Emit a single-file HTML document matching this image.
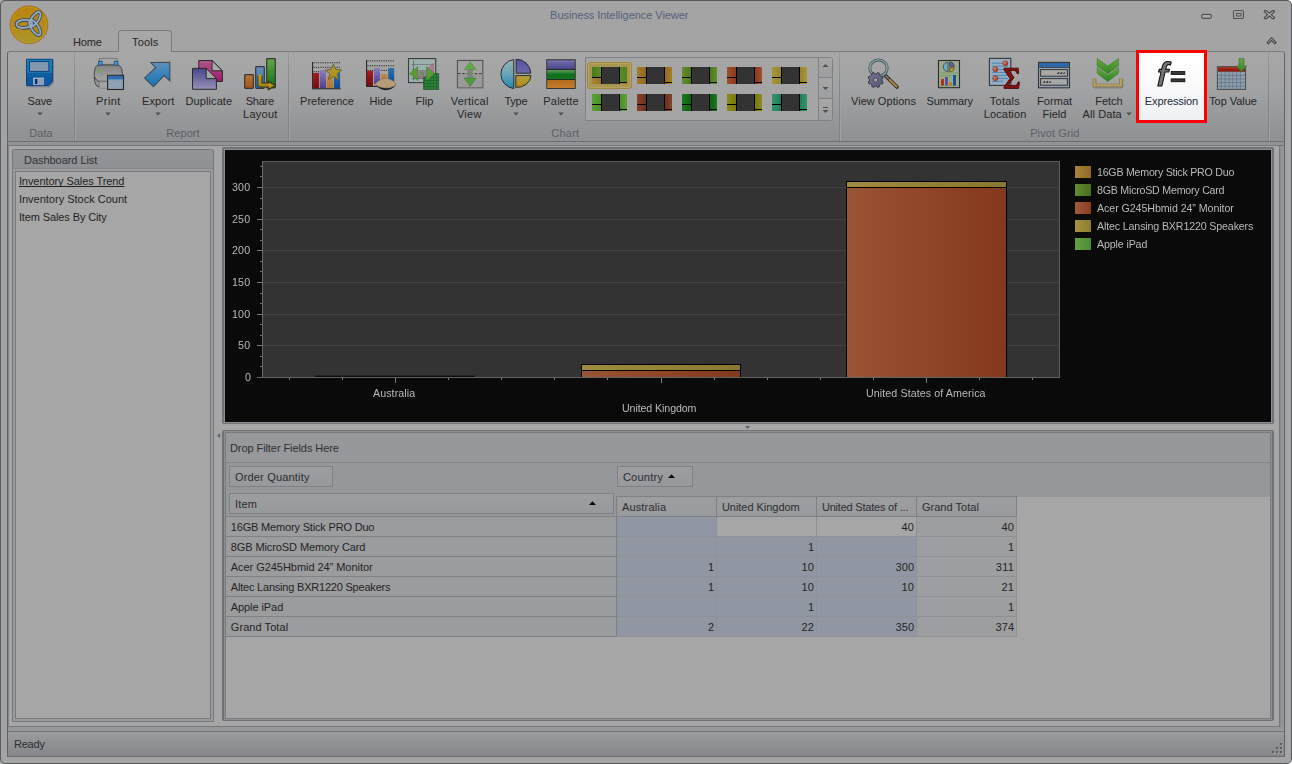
<!DOCTYPE html>
<html>
<head>
<meta charset="utf-8">
<title>Business Intelligence Viewer</title>
<style>
*{box-sizing:border-box;margin:0;padding:0}
html,body{width:1292px;height:764px;overflow:hidden;background:linear-gradient(90deg,#ababab 0,#ababab 50%,#fff 50%)}
body{font-family:"Liberation Sans",sans-serif;font-size:11px;color:#262626;position:relative}
.abs{position:absolute}
#win{position:absolute;left:0;top:0;width:1292px;height:764px;background:#a4a4a4;border-radius:5px;border:1px solid #575a5e}
.t{position:absolute;white-space:nowrap;line-height:13px;font-size:11px}
#ribbon{position:absolute;left:7px;top:51px;width:1278px;height:91px;border:1px solid #5f6266;border-top-color:#777a7e;border-bottom-color:#6c6f73;border-radius:3px 3px 0 0;background:linear-gradient(#a7a7a7 0,#a2a3a4 40%,#97989a 75%,#8e9093 100%)}
.gsep{position:absolute;top:52px;width:1px;height:89px;background:linear-gradient(rgba(125,128,132,.35),#82858a 45%,#7f8286)}
.gsep:after{content:"";position:absolute;left:1px;top:0;width:1px;height:100%;background:linear-gradient(rgba(170,171,173,.1),#a2a3a5)}
.gcap{color:#5b6068}
.lbl{color:#262626}
#tab{position:absolute;left:118px;top:30px;width:54px;height:22px;border:1px solid #777a7e;border-bottom:none;border-radius:4px 4px 0 0;background:#a7a7a7}
.dd{position:absolute;width:7px;height:4px;background:#4a4d51;clip-path:polygon(0.8px 0.4px,6.2px 0.4px,3.5px 3.4px)}
.gi{position:absolute;width:35px;height:17px;background:#000}
.gi:before{content:"";position:absolute;left:10px;top:0;width:17px;height:17px;background:#333}
.gi i{position:absolute;display:block}
.li{color:#1f1f1f}
.ct{color:#b9b9b9;will-change:transform}
.pv{color:#242424}
</style>
</head>
<body>
<div id="win"></div>
<div class="t" style="left:550.12px;top:9px;letter-spacing:-0.055px;color:#54617c">Business Intelligence Viewer</div>
<div class="t" style="left:73.00px;top:36px;letter-spacing:-0.136px;">Home</div>
<div id="ribbon"></div><div id="tab"></div>
<div class="t" style="left:132.10px;top:36px;letter-spacing:0.143px;">Tools</div>
<div class="gsep" style="left:74px"></div>
<div class="gsep" style="left:288px"></div>
<div class="gsep" style="left:839px"></div>
<div class="gsep" style="left:1268px"></div>
<div class="t gcap" style="left:29.36px;top:127px;letter-spacing:0.013px;">Data</div>
<div class="t gcap" style="left:166.37px;top:127px;letter-spacing:0.045px;">Report</div>
<div class="t gcap" style="left:551.27px;top:127px;letter-spacing:0.239px;">Chart</div>
<div class="t gcap" style="left:1030.20px;top:127px;letter-spacing:0.100px;">Pivot Grid</div>
<div class="abs" style="left:1136px;top:50px;width:71px;height:73px;border:3px solid #fe0000;background:linear-gradient(#ffffff 0,#fcfcfd 35%,#eef0f2 100%)"></div>
<div class="t lbl" style="left:27.58px;top:95px;letter-spacing:-0.145px;">Save</div>
<div class="dd" style="left:36.5px;top:112px"></div>
<div class="t lbl" style="left:96.02px;top:95px;letter-spacing:0.435px;">Print</div>
<div class="dd" style="left:104.5px;top:112px"></div>
<div class="t lbl" style="left:142.01px;top:95px;letter-spacing:0.117px;">Export</div>
<div class="dd" style="left:154.5px;top:112px"></div>
<div class="t lbl" style="left:185.45px;top:95px;letter-spacing:0.105px;">Duplicate</div>
<div class="t lbl" style="left:245.64px;top:95px;letter-spacing:-0.212px;">Share</div>
<div class="t lbl" style="left:243.07px;top:108px;letter-spacing:0.245px;">Layout</div>
<div class="t lbl" style="left:300.10px;top:95px;">Preference</div>
<div class="t lbl" style="left:369.52px;top:95px;letter-spacing:0.044px;">Hide</div>
<div class="t lbl" style="left:415.40px;top:95px;letter-spacing:0.091px;">Flip</div>
<div class="t lbl" style="left:450.81px;top:95px;letter-spacing:0.215px;">Vertical</div>
<div class="t lbl" style="left:456.94px;top:108px;letter-spacing:0.286px;">View</div>
<div class="t lbl" style="left:504.47px;top:95px;letter-spacing:-0.265px;">Type</div>
<div class="dd" style="left:512.5px;top:112px"></div>
<div class="t lbl" style="left:543.34px;top:95px;letter-spacing:0.179px;">Palette</div>
<div class="dd" style="left:557.5px;top:112px"></div>
<div class="t lbl" style="left:850.97px;top:95px;letter-spacing:0.041px;">View Options</div>
<div class="t lbl" style="left:926.60px;top:95px;letter-spacing:-0.109px;">Summary</div>
<div class="t lbl" style="left:989.78px;top:95px;letter-spacing:0.258px;">Totals</div>
<div class="t lbl" style="left:983.68px;top:108px;letter-spacing:0.151px;">Location</div>
<div class="t lbl" style="left:1037.07px;top:95px;letter-spacing:0.043px;">Format</div>
<div class="t lbl" style="left:1042.60px;top:108px;letter-spacing:-0.009px;">Field</div>
<div class="t lbl" style="left:1095.27px;top:95px;letter-spacing:-0.063px;">Fetch</div>
<div class="t lbl" style="left:1082.60px;top:108px;letter-spacing:0.084px;">All Data</div>
<div class="dd" style="left:1125.5px;top:112px"></div>
<div class="t lbl" style="left:1144.79px;top:95px;letter-spacing:-0.112px;color:#232a3a">Expression</div>
<div class="t lbl" style="left:1209.17px;top:95px;letter-spacing:-0.057px;">Top Value</div>
<div class="abs" style="left:585px;top:57px;width:248px;height:64px;border:1px solid #7e8185;border-radius:0 3px 3px 0;background:#a5a5a5"></div>
<div class="abs" style="left:818px;top:58px;width:1px;height:62px;background:#7e8185"></div>
<div class="abs" style="left:819px;top:58px;width:13px;height:19px;background:linear-gradient(#a7a7a7,#9d9e9f)"></div>
<div class="abs" style="left:819px;top:78px;width:13px;height:20px;background:linear-gradient(#a7a7a7,#9d9e9f)"></div>
<div class="abs" style="left:819px;top:99px;width:13px;height:21px;background:linear-gradient(#a7a7a7,#9d9e9f)"></div>
<div class="abs" style="left:819px;top:77px;width:13px;height:1px;background:#7e8185"></div>
<div class="abs" style="left:819px;top:98px;width:13px;height:1px;background:#7e8185"></div>
<svg class="abs" style="left:819px;top:58px" width="13" height="62" viewBox="0 0 13 62">
 <path d="M3.5 9 L6.5 6 L9.5 9 Z" fill="#4d5054"/><path d="M3.5 29 L9.5 29 L6.5 32 Z" fill="#4d5054"/>
 <rect x="4" y="49" width="5" height="1" fill="#4d5054"/><path d="M3.5 52 L9.5 52 L6.5 55 Z" fill="#4d5054"/></svg>
<div class="abs" style="left:587px;top:62px;width:45px;height:27px;border:1px solid #a38540;border-radius:3px;background:#a89650;box-shadow:inset 0 0 0 1px #b3a45e"></div>
<div class="gi" style="left:592px;top:67px"><i style="left:0;top:0;width:9px;height:10px;background:linear-gradient(90deg,#4a7a18,#5a8a24)"></i><i style="left:0;top:11px;width:9px;height:6px;background:linear-gradient(90deg,#a88434,#9a7424)"></i><i style="left:28px;top:0;width:7px;height:15px;background:linear-gradient(90deg,#5a8a24,#547f22)"></i><i style="left:28px;top:16px;width:7px;height:1px;background:linear-gradient(90deg,#a88434,#9a7424)"></i></div>
<div class="gi" style="left:637px;top:67px"><i style="left:0;top:0;width:9px;height:10px;background:linear-gradient(90deg,#a47c2c,#946a18)"></i><i style="left:0;top:11px;width:9px;height:6px;background:linear-gradient(90deg,#a47c2c,#946a18)"></i><i style="left:28px;top:0;width:7px;height:15px;background:linear-gradient(90deg,#946a18,#a47c2c)"></i><i style="left:28px;top:16px;width:7px;height:1px;background:linear-gradient(90deg,#946a18,#a47c2c)"></i></div>
<div class="gi" style="left:682px;top:67px"><i style="left:0;top:0;width:9px;height:10px;background:linear-gradient(90deg,#62902e,#4a7818)"></i><i style="left:0;top:11px;width:9px;height:6px;background:linear-gradient(90deg,#62902e,#4a7818)"></i><i style="left:28px;top:0;width:7px;height:15px;background:linear-gradient(90deg,#4a7818,#62902e)"></i><i style="left:28px;top:16px;width:7px;height:1px;background:linear-gradient(90deg,#4a7818,#62902e)"></i></div>
<div class="gi" style="left:727px;top:67px"><i style="left:0;top:0;width:9px;height:10px;background:linear-gradient(90deg,#a0502e,#8c3a1a)"></i><i style="left:0;top:11px;width:9px;height:6px;background:linear-gradient(90deg,#a0502e,#8c3a1a)"></i><i style="left:28px;top:0;width:7px;height:15px;background:linear-gradient(90deg,#8c3a1a,#a0502e)"></i><i style="left:28px;top:16px;width:7px;height:1px;background:linear-gradient(90deg,#8c3a1a,#a0502e)"></i></div>
<div class="gi" style="left:772px;top:67px"><i style="left:0;top:0;width:9px;height:10px;background:linear-gradient(90deg,#a8963c,#98842a)"></i><i style="left:0;top:11px;width:9px;height:6px;background:linear-gradient(90deg,#a8963c,#98842a)"></i><i style="left:28px;top:0;width:7px;height:15px;background:linear-gradient(90deg,#98842a,#a8963c)"></i><i style="left:28px;top:16px;width:7px;height:1px;background:linear-gradient(90deg,#98842a,#a8963c)"></i></div>
<div class="gi" style="left:592px;top:94px"><i style="left:0;top:0;width:9px;height:10px;background:linear-gradient(90deg,#5ea038,#4a9024)"></i><i style="left:0;top:11px;width:9px;height:6px;background:linear-gradient(90deg,#5ea038,#4a9024)"></i><i style="left:28px;top:0;width:7px;height:15px;background:linear-gradient(90deg,#4a9024,#5ea038)"></i><i style="left:28px;top:16px;width:7px;height:1px;background:linear-gradient(90deg,#4a9024,#5ea038)"></i></div>
<div class="gi" style="left:637px;top:94px"><i style="left:0;top:0;width:9px;height:10px;background:linear-gradient(90deg,#80422a,#6e3018)"></i><i style="left:0;top:11px;width:9px;height:6px;background:linear-gradient(90deg,#80422a,#6e3018)"></i><i style="left:28px;top:0;width:7px;height:15px;background:linear-gradient(90deg,#6e3018,#80422a)"></i><i style="left:28px;top:16px;width:7px;height:1px;background:linear-gradient(90deg,#6e3018,#80422a)"></i></div>
<div class="gi" style="left:682px;top:94px"><i style="left:0;top:0;width:9px;height:10px;background:linear-gradient(90deg,#1c7a22,#0c6010)"></i><i style="left:0;top:11px;width:9px;height:6px;background:linear-gradient(90deg,#1c7a22,#0c6010)"></i><i style="left:28px;top:0;width:7px;height:15px;background:linear-gradient(90deg,#0c6010,#1c7a22)"></i><i style="left:28px;top:16px;width:7px;height:1px;background:linear-gradient(90deg,#0c6010,#1c7a22)"></i></div>
<div class="gi" style="left:727px;top:94px"><i style="left:0;top:0;width:9px;height:10px;background:linear-gradient(90deg,#8c8c1e,#7a7a0a)"></i><i style="left:0;top:11px;width:9px;height:6px;background:linear-gradient(90deg,#8c8c1e,#7a7a0a)"></i><i style="left:28px;top:0;width:7px;height:15px;background:linear-gradient(90deg,#7a7a0a,#8c8c1e)"></i><i style="left:28px;top:16px;width:7px;height:1px;background:linear-gradient(90deg,#7a7a0a,#8c8c1e)"></i></div>
<div class="gi" style="left:772px;top:94px"><i style="left:0;top:0;width:9px;height:10px;background:linear-gradient(90deg,#35946e,#1f7c58)"></i><i style="left:0;top:11px;width:9px;height:6px;background:linear-gradient(90deg,#35946e,#1f7c58)"></i><i style="left:28px;top:0;width:7px;height:15px;background:linear-gradient(90deg,#1f7c58,#35946e)"></i><i style="left:28px;top:16px;width:7px;height:1px;background:linear-gradient(90deg,#1f7c58,#35946e)"></i></div>
<svg class="abs" style="left:0;top:0" width="1292" height="150" viewBox="0 0 1292 150">
<defs>
 <radialGradient id="gLogo" cx="50%" cy="35%" r="70%"><stop offset="0" stop-color="#c08a10"/><stop offset=".55" stop-color="#b98a14"/><stop offset="1" stop-color="#a8902a"/></radialGradient>
 <linearGradient id="gLogo2" x1="0" y1="0" x2="0" y2="1"><stop offset="0" stop-color="#bb8410"/><stop offset=".6" stop-color="#b48c18"/><stop offset="1" stop-color="#a8982e"/></linearGradient>
 <linearGradient id="gSave" x1="0" y1="0" x2="0" y2="1"><stop offset="0" stop-color="#1b86b6"/><stop offset=".5" stop-color="#177ab0"/><stop offset=".52" stop-color="#0f5fa4"/><stop offset="1" stop-color="#0c55a0"/></linearGradient>
 <linearGradient id="gPrn" x1="0" y1="0" x2="0" y2="1"><stop offset="0" stop-color="#828282"/><stop offset=".6" stop-color="#a0a0a0"/><stop offset="1" stop-color="#8c8c8c"/></linearGradient>
 <linearGradient id="gExp" x1="0" y1="0" x2="0" y2="1"><stop offset="0" stop-color="#5f90c0"/><stop offset="1" stop-color="#1274b4"/></linearGradient>
 <linearGradient id="gDupA" x1="0" y1="0" x2="0" y2="1"><stop offset="0" stop-color="#b0588a"/><stop offset="1" stop-color="#a0186a"/></linearGradient>
 <linearGradient id="gDupB" x1="0" y1="0" x2="0" y2="1"><stop offset="0" stop-color="#46468c"/><stop offset="1" stop-color="#9690b6"/></linearGradient>
 <linearGradient id="gOr" x1="0" y1="0" x2="0" y2="1"><stop offset="0" stop-color="#b87830"/><stop offset="1" stop-color="#a8501c"/></linearGradient>
 <linearGradient id="gBl" x1="0" y1="0" x2="0" y2="1"><stop offset="0" stop-color="#6a8eb8"/><stop offset="1" stop-color="#1878b8"/></linearGradient>
 <linearGradient id="gGr" x1="0" y1="0" x2="0" y2="1"><stop offset="0" stop-color="#62a848"/><stop offset="1" stop-color="#0e7016"/></linearGradient>
 <linearGradient id="gYe" x1="0" y1="0" x2="0" y2="1"><stop offset="0" stop-color="#c0a020"/><stop offset="1" stop-color="#a88414"/></linearGradient>
 <linearGradient id="gRed" x1="0" y1="0" x2="0" y2="1"><stop offset="0" stop-color="#a81a20"/><stop offset="1" stop-color="#780c0c"/></linearGradient>
 <linearGradient id="gPur" x1="0" y1="0" x2="0" y2="1"><stop offset="0" stop-color="#8a80b8"/><stop offset="1" stop-color="#4a3e94"/></linearGradient>
 <linearGradient id="gOr2" x1="0" y1="0" x2="0" y2="1"><stop offset="0" stop-color="#c08c4c"/><stop offset="1" stop-color="#b87424"/></linearGradient>
 <linearGradient id="gBl2" x1="0" y1="0" x2="0" y2="1"><stop offset="0" stop-color="#2a74b0"/><stop offset="1" stop-color="#0e4c90"/></linearGradient>
 <linearGradient id="gStar" x1="0" y1="0" x2="0" y2="1"><stop offset="0" stop-color="#b8a030"/><stop offset="1" stop-color="#a88c14"/></linearGradient>

 <linearGradient id="gPieL" x1="0" y1="0" x2="0" y2="1"><stop offset="0" stop-color="#98b4b8"/><stop offset=".5" stop-color="#6aa4b8"/><stop offset="1" stop-color="#1c88b4"/></linearGradient>
 <linearGradient id="gPur2" x1="0" y1="0" x2="0" y2="1"><stop offset="0" stop-color="#5450a0"/><stop offset="1" stop-color="#6c68ac"/></linearGradient>
 <linearGradient id="gGold" x1="0" y1="0" x2="0" y2="1"><stop offset="0" stop-color="#b8a03c"/><stop offset="1" stop-color="#b08a10"/></linearGradient>
 <linearGradient id="gPalP" x1="0" y1="0" x2="0" y2="1"><stop offset="0" stop-color="#7672ac"/><stop offset="1" stop-color="#48448c"/></linearGradient>
 <linearGradient id="gPalG" x1="0" y1="0" x2="0" y2="1"><stop offset="0" stop-color="#5aa05a"/><stop offset=".55" stop-color="#0c6c1a"/><stop offset="1" stop-color="#14781e"/></linearGradient>
 <linearGradient id="gPalO" x1="0" y1="0" x2="0" y2="1"><stop offset="0" stop-color="#b06c1c"/><stop offset="1" stop-color="#c47c2c"/></linearGradient>

 <linearGradient id="gGear" x1="0" y1="0" x2="1" y2="1"><stop offset="0" stop-color="#74768f"/><stop offset="1" stop-color="#56587c"/></linearGradient>
 <radialGradient id="gBall" cx="35%" cy="35%" r="70%"><stop offset="0" stop-color="#d08a78"/><stop offset="1" stop-color="#a82c14"/></radialGradient>
 <linearGradient id="gChev" x1="0" y1="0" x2="0" y2="1"><stop offset="0" stop-color="#6aa83c"/><stop offset="1" stop-color="#2c8424"/></linearGradient>
 <linearGradient id="gTVred" x1="0" y1="0" x2="0" y2="1"><stop offset="0" stop-color="#b0301c"/><stop offset="1" stop-color="#801408"/></linearGradient>
</defs>

<!-- app logo -->
<circle cx="29" cy="24.8" r="18.9" fill="url(#gLogo2)" stroke="#ae6c14" stroke-width="0.9"/>
<circle cx="29" cy="24.8" r="17.6" fill="none" stroke="#c0a030" stroke-width="0.8" opacity=".55"/>
<g fill="none" stroke="#34445c" stroke-width="3.5">
 <ellipse cx="24.3" cy="23.9" rx="7.9" ry="4" transform="rotate(-3 24.3 23.9)"/>
 <ellipse cx="35" cy="19.3" rx="8.4" ry="3.5" transform="rotate(-56 35 19.3)"/>
 <ellipse cx="34.9" cy="27.5" rx="8.8" ry="3.5" transform="rotate(57 34.9 27.5)"/>
</g>
<g fill="none" stroke="#94acc0" stroke-width="1.9">
 <ellipse cx="24.3" cy="23.9" rx="7.9" ry="4" transform="rotate(-3 24.3 23.9)"/>
 <ellipse cx="35" cy="19.3" rx="8.4" ry="3.5" transform="rotate(-56 35 19.3)"/>
 <ellipse cx="34.9" cy="27.5" rx="8.8" ry="3.5" transform="rotate(57 34.9 27.5)"/>
</g>

<!-- Save -->
<path d="M27 87.6 L50 87.6 L54 83 L54 60 L27 60 Z" fill="#6e7074" opacity=".5"/>
<path d="M26.5 59.3 L52.6 59.3 L52.6 81.4 L48.8 85.6 L26.5 85.6 Z" fill="url(#gSave)" stroke="#0b3f88" stroke-width="1"/>
<rect x="29.5" y="61.6" width="19.4" height="9.8" fill="#8398ac" stroke="#0b3f88" stroke-width="1"/>
<rect x="33" y="77.8" width="11" height="7.3" fill="#8ea1b4"/>
<rect x="33" y="77.8" width="11" height="1" fill="#a8b8c6"/>
<rect x="35" y="79" width="2.3" height="5" fill="#0a2f7a"/>

<!-- Print -->
<rect x="99.3" y="58.3" width="17.6" height="6" fill="#a6a6a6" stroke="#707070" stroke-width=".8"/>
<path d="M98 65 C95 66,94.3 70,94.3 75.5 C94.3 82,95.5 86.5,99 86.8 L118 86.8 C121.5 86,122.3 81,122.3 75.5 C122.3 70,121.6 66,118 65 Z" fill="url(#gPrn)" stroke="#454545" stroke-width="1"/>
<path d="M94.6 77 C96 80.5,98 81.4,100 81.4 L108 81.4" fill="none" stroke="#3a3a3a" stroke-width="1"/>
<rect x="98.6" y="61.3" width="3.4" height="3.8" fill="#5a96cc" stroke="#1d5a98" stroke-width="1"/>
<rect x="114.4" y="61.3" width="3.4" height="3.8" fill="#5a96cc" stroke="#1d5a98" stroke-width="1"/>
<circle cx="99.1" cy="70.9" r="1.6" fill="#6cb04a" stroke="#8a8a8a" stroke-width=".5"/>
<rect x="99.4" y="81.6" width="9" height="6.6" fill="#a4a4a4" stroke="#7a7a7a" stroke-width=".6"/>
<rect x="107.6" y="75.3" width="15.9" height="14.2" fill="#8ea2b4" stroke="#262626" stroke-width="1.1"/>
<rect x="108.2" y="75.9" width="14.7" height="3.6" fill="#2c6eb0"/>
<rect x="108.2" y="79.5" width="14.7" height=".8" fill="#6a9ac8"/>

<!-- Export -->
<path d="M150.9 62.5 L169.8 62.3 L169.8 80.8 L164 75.6 L153.4 86.8 L144.6 77.9 L155.6 67.6 Z" fill="url(#gExp)" stroke="#424a54" stroke-width="1.1" stroke-linejoin="miter"/>

<!-- Duplicate -->
<path d="M198.8 60.5 L212 60.5 L222.4 70.8 L222.4 81.5 L198.8 81.5 Z" fill="url(#gDupA)" stroke="#2a2a2a" stroke-width="1"/>
<path d="M212 60.5 L212 70.8 L222.4 70.8 Z" fill="#a8a8a8" stroke="#2a2a2a" stroke-width="1" stroke-linejoin="round"/>
<path d="M192.5 68.4 L206.2 68.4 L216.4 78.6 L216.4 89.3 L192.5 89.3 Z" fill="url(#gDupB)" stroke="#2a2a2a" stroke-width="1"/>
<path d="M206.2 68.4 L206.2 78.6 L216.4 78.6 Z" fill="#a6a6a6" stroke="#2a2a2a" stroke-width="1" stroke-linejoin="round"/>

<!-- Share Layout -->
<rect x="244.7" y="74.7" width="8.6" height="13.6" rx=".7" fill="url(#gOr)" stroke="#363636" stroke-width="1.2"/>
<rect x="255.7" y="66.6" width="8.6" height="21.7" rx=".7" fill="url(#gBl)" stroke="#363636" stroke-width="1.2"/>
<rect x="266.7" y="58.6" width="8.6" height="29.4" rx=".7" fill="url(#gGr)" stroke="#363636" stroke-width="1.2"/>
<path d="M259.9 75.4 L259.9 85 L269.5 85" fill="none" stroke="#3c3420" stroke-width="5" stroke-linejoin="round"/>
<path d="M268.2 80.8 L275.8 85.5 L268.2 90.2 Z" fill="#3c3420" stroke="#3c3420" stroke-width=".8" stroke-linejoin="round"/>
<path d="M259.9 75.4 L259.9 85 L269.5 85" fill="none" stroke="url(#gYe)" stroke-width="3" stroke-linejoin="round"/>
<rect x="258.4" y="74.4" width="3" height="2" fill="#b89c24"/>
<path d="M268.8 82.4 L274.2 85.5 L268.8 88.6 Z" fill="#b8981c"/>

<!-- Preference -->
<rect x="313.5" y="62.2" width="1.1" height="1.1" fill="#2a2a2a"/><rect x="315.8" y="62.2" width="1.1" height="1.1" fill="#2a2a2a"/><rect x="318.1" y="62.2" width="1.1" height="1.1" fill="#2a2a2a"/><rect x="320.4" y="62.2" width="1.1" height="1.1" fill="#2a2a2a"/><rect x="322.7" y="62.2" width="1.1" height="1.1" fill="#2a2a2a"/><rect x="325.0" y="62.2" width="1.1" height="1.1" fill="#2a2a2a"/><rect x="327.3" y="62.2" width="1.1" height="1.1" fill="#2a2a2a"/><rect x="329.6" y="62.2" width="1.1" height="1.1" fill="#2a2a2a"/><rect x="331.9" y="62.2" width="1.1" height="1.1" fill="#2a2a2a"/><rect x="334.2" y="62.2" width="1.1" height="1.1" fill="#2a2a2a"/><rect x="336.5" y="62.2" width="1.1" height="1.1" fill="#2a2a2a"/><rect x="338.8" y="62.2" width="1.1" height="1.1" fill="#2a2a2a"/><rect x="313.5" y="66.8" width="1.1" height="1.1" fill="#2a2a2a"/><rect x="315.8" y="66.8" width="1.1" height="1.1" fill="#2a2a2a"/><rect x="318.1" y="66.8" width="1.1" height="1.1" fill="#2a2a2a"/><rect x="320.4" y="66.8" width="1.1" height="1.1" fill="#2a2a2a"/><rect x="322.7" y="66.8" width="1.1" height="1.1" fill="#2a2a2a"/><rect x="325.0" y="66.8" width="1.1" height="1.1" fill="#2a2a2a"/><rect x="327.3" y="66.8" width="1.1" height="1.1" fill="#2a2a2a"/><rect x="329.6" y="66.8" width="1.1" height="1.1" fill="#2a2a2a"/><rect x="331.9" y="66.8" width="1.1" height="1.1" fill="#2a2a2a"/><rect x="334.2" y="66.8" width="1.1" height="1.1" fill="#2a2a2a"/><rect x="336.5" y="66.8" width="1.1" height="1.1" fill="#2a2a2a"/><rect x="338.8" y="66.8" width="1.1" height="1.1" fill="#2a2a2a"/><rect x="313.5" y="71.2" width="1.1" height="1.1" fill="#2a2a2a"/><rect x="315.8" y="71.2" width="1.1" height="1.1" fill="#2a2a2a"/><rect x="318.1" y="71.2" width="1.1" height="1.1" fill="#2a2a2a"/><rect x="320.4" y="71.2" width="1.1" height="1.1" fill="#2a2a2a"/><rect x="322.7" y="71.2" width="1.1" height="1.1" fill="#2a2a2a"/><rect x="325.0" y="71.2" width="1.1" height="1.1" fill="#2a2a2a"/><rect x="327.3" y="71.2" width="1.1" height="1.1" fill="#2a2a2a"/><rect x="329.6" y="71.2" width="1.1" height="1.1" fill="#2a2a2a"/><rect x="331.9" y="71.2" width="1.1" height="1.1" fill="#2a2a2a"/><rect x="334.2" y="71.2" width="1.1" height="1.1" fill="#2a2a2a"/><rect x="336.5" y="71.2" width="1.1" height="1.1" fill="#2a2a2a"/><rect x="338.8" y="71.2" width="1.1" height="1.1" fill="#2a2a2a"/>
<rect x="312" y="62" width="1.1" height="26.8" fill="#2a2a2a"/>
<rect x="313.1" y="73" width="6" height="15.3" fill="url(#gRed)"/>
<rect x="319.9" y="70" width="6.2" height="18.3" fill="url(#gPur)"/>
<rect x="326.9" y="75.8" width="6.2" height="12.5" fill="url(#gOr2)"/>
<rect x="333.9" y="71" width="6.2" height="17.3" fill="url(#gBl2)"/>
<rect x="312" y="88.2" width="28.6" height="1.1" fill="#2a2a2a"/>
<polygon points="333.50,64.10 335.79,69.44 341.58,69.97 337.21,73.81 338.50,79.48 333.50,76.50 328.50,79.48 329.79,73.81 325.42,69.97 331.21,69.44" fill="url(#gStar)" stroke="#6e6034" stroke-width="1" stroke-linejoin="round"/>

<!-- Hide -->
<rect x="367.5" y="60.3" width="1.1" height="1.1" fill="#2a2a2a"/><rect x="369.8" y="60.3" width="1.1" height="1.1" fill="#2a2a2a"/><rect x="372.1" y="60.3" width="1.1" height="1.1" fill="#2a2a2a"/><rect x="374.4" y="60.3" width="1.1" height="1.1" fill="#2a2a2a"/><rect x="376.7" y="60.3" width="1.1" height="1.1" fill="#2a2a2a"/><rect x="379.0" y="60.3" width="1.1" height="1.1" fill="#2a2a2a"/><rect x="381.3" y="60.3" width="1.1" height="1.1" fill="#2a2a2a"/><rect x="383.6" y="60.3" width="1.1" height="1.1" fill="#2a2a2a"/><rect x="385.9" y="60.3" width="1.1" height="1.1" fill="#2a2a2a"/><rect x="388.2" y="60.3" width="1.1" height="1.1" fill="#2a2a2a"/><rect x="390.5" y="60.3" width="1.1" height="1.1" fill="#2a2a2a"/><rect x="392.8" y="60.3" width="1.1" height="1.1" fill="#2a2a2a"/><rect x="367.5" y="65.2" width="1.1" height="1.1" fill="#2a2a2a"/><rect x="369.8" y="65.2" width="1.1" height="1.1" fill="#2a2a2a"/><rect x="372.1" y="65.2" width="1.1" height="1.1" fill="#2a2a2a"/><rect x="374.4" y="65.2" width="1.1" height="1.1" fill="#2a2a2a"/><rect x="376.7" y="65.2" width="1.1" height="1.1" fill="#2a2a2a"/><rect x="379.0" y="65.2" width="1.1" height="1.1" fill="#2a2a2a"/><rect x="381.3" y="65.2" width="1.1" height="1.1" fill="#2a2a2a"/><rect x="383.6" y="65.2" width="1.1" height="1.1" fill="#2a2a2a"/><rect x="385.9" y="65.2" width="1.1" height="1.1" fill="#2a2a2a"/><rect x="388.2" y="65.2" width="1.1" height="1.1" fill="#2a2a2a"/><rect x="390.5" y="65.2" width="1.1" height="1.1" fill="#2a2a2a"/><rect x="392.8" y="65.2" width="1.1" height="1.1" fill="#2a2a2a"/><rect x="367.5" y="69.8" width="1.1" height="1.1" fill="#2a2a2a"/><rect x="369.8" y="69.8" width="1.1" height="1.1" fill="#2a2a2a"/><rect x="372.1" y="69.8" width="1.1" height="1.1" fill="#2a2a2a"/><rect x="374.4" y="69.8" width="1.1" height="1.1" fill="#2a2a2a"/><rect x="376.7" y="69.8" width="1.1" height="1.1" fill="#2a2a2a"/><rect x="379.0" y="69.8" width="1.1" height="1.1" fill="#2a2a2a"/><rect x="381.3" y="69.8" width="1.1" height="1.1" fill="#2a2a2a"/><rect x="383.6" y="69.8" width="1.1" height="1.1" fill="#2a2a2a"/><rect x="385.9" y="69.8" width="1.1" height="1.1" fill="#2a2a2a"/><rect x="388.2" y="69.8" width="1.1" height="1.1" fill="#2a2a2a"/><rect x="390.5" y="69.8" width="1.1" height="1.1" fill="#2a2a2a"/><rect x="392.8" y="69.8" width="1.1" height="1.1" fill="#2a2a2a"/>
<rect x="366" y="60" width="1.1" height="26.5" fill="#2a2a2a"/>
<rect x="367" y="70.8" width="6" height="15.4" fill="url(#gRed)"/>
<rect x="374" y="68" width="6" height="16" fill="url(#gPur)"/>
<rect x="381.2" y="74" width="6" height="6" fill="url(#gOr2)"/>
<rect x="388.2" y="68" width="6" height="15" fill="url(#gBl2)"/>
<rect x="366" y="85.9" width="12" height="1.1" fill="#2a2a2a"/>
<path d="M374.6 84.6 C380 88.2,390 90.6,396.6 84.6 C390 93,380 91,374.6 84.6 Z" fill="#1e1e1e"/>
<path d="M374.8 84.3 C379 79.5,383 78.4,386 78.4 C390 78.4,394 81,396.4 84.2 C390 89.6,380 88.6,374.8 84.3 Z" fill="#b89c78" stroke="#7a6a54" stroke-width=".5"/>

<!-- Flip -->
<rect x="408.5" y="58.6" width="27.2" height="24" fill="#9cb0ae" stroke="#3c3c3c" stroke-width="1.1"/>
<path d="M413.5 60.5 L413.5 80.5 M411.5 78.6 L433.5 78.6" stroke="#5a6a6a" stroke-width=".9" fill="none"/>
<path d="M414 64.5 L433 64.5 M411.5 69.5 L413 69.5 M411.5 64.5 L413 64.5 M411.5 74.5 L413 74.5" stroke="#6a7a7a" stroke-width=".8" fill="none"/>
<path d="M433.3 63.6 L433.3 78 L417.5 78 Z" fill="#b87e98" stroke="#a04a74" stroke-width=".6"/>
<rect x="423.6" y="73.6" width="15.1" height="16" fill="#1c6a2c" stroke="#2c5a34" stroke-width=".8"/>
<path d="M425 76 H438 M425 79 H438 M425 82 H438 M425 85 H438 M425 88 H438" stroke="#3c9a48" stroke-width="1" stroke-dasharray="2.2 .8" fill="none"/>
<path d="M409.6 73.6 L417.8 66.6 L417.8 80.6 Z" fill="#5a9c34" stroke="#3c7a24" stroke-width=".5"/>
<path d="M434.8 73.6 L426.6 66.6 L426.6 80.6 Z" fill="#5a9c34" stroke="#3c7a24" stroke-width=".5"/>
<rect x="417.6" y="70.6" width="9.2" height="6" fill="#8a8a8a" stroke="#6a6a6a" stroke-width=".5"/>
<circle cx="422.2" cy="73.6" r="1.6" fill="#6a9c5a" stroke="#5a5a5a" stroke-width=".4"/>

<!-- Vertical View -->
<rect x="457.4" y="60.4" width="25.4" height="27.4" fill="#a2a2a2" stroke="#4a4a4a" stroke-width="1"/>
<rect x="457.9" y="73.6" width="24.4" height="13.7" fill="#9a9a9a"/>
<path d="M458 73.6 H482.5" stroke="#3a3a3a" stroke-width="1" stroke-dasharray="2.6 1.6" fill="none"/>
<rect x="467.4" y="69" width="5.6" height="9.6" fill="#868686"/>
<path d="M470.2 61.6 L476.2 69.6 L464.2 69.6 Z" fill="#5fa848" stroke="#4a8a3a" stroke-width=".5"/>
<path d="M470.2 86.6 L476.2 78 L464.2 78 Z" fill="#4c9c38" stroke="#3a7a2a" stroke-width=".5"/>
<circle cx="470.2" cy="73.7" r="1.5" fill="#5fa848" stroke="#6a6a6a" stroke-width=".4"/>

<!-- Type (pie) -->
<path d="M513.8 59.6 A14.6 14.6 0 0 0 513.8 88.6 Z" fill="url(#gPieL)" stroke="#2c2c2c" stroke-width="1"/>
<path d="M516.2 59.2 A14.6 14.6 0 0 1 530.8 73.2 L516.2 73.2 Z" fill="url(#gPur2)" stroke="#2c2c2c" stroke-width="1"/>
<path d="M531 75.6 A14.4 12.4 0 0 1 515.8 87.4 L515.8 75.6 Z" fill="url(#gGold)" stroke="#2c2c2c" stroke-width="1"/>

<!-- Palette -->
<rect x="546.3" y="59.3" width="29.4" height="29.6" fill="#2a2a2a"/>
<rect x="547.2" y="60.2" width="27.6" height="8.8" fill="url(#gPalP)"/>
<rect x="547.2" y="70" width="27.6" height="9" fill="url(#gPalG)"/>
<rect x="547.2" y="80" width="27.6" height="8" fill="url(#gPalO)"/>

<!-- View Options -->
<path d="M885.4 75.6 L897 87" stroke="#2c2a26" stroke-width="3.6" stroke-linecap="round" fill="none"/>
<path d="M889.6 79.8 L896.6 86.6" stroke="#b08c3c" stroke-width="2" stroke-linecap="round" fill="none"/>
<path d="M885.6 75.8 L888.6 78.8" stroke="#8e8e8e" stroke-width="1.3" fill="none"/>
<ellipse cx="878.5" cy="68.1" rx="8.7" ry="8.2" fill="none" stroke="#44545a" stroke-width="3"/>
<ellipse cx="878.5" cy="68.1" rx="8.7" ry="8.2" fill="none" stroke="#8ea2a4" stroke-width="1.4"/>
<polygon points="883.19,81.80 882.27,84.02 880.85,83.62 879.32,85.15 879.72,86.57 877.50,87.49 876.78,86.21 874.62,86.21 873.90,87.49 871.68,86.57 872.08,85.15 870.55,83.62 869.13,84.02 868.21,81.80 869.49,81.08 869.49,78.92 868.21,78.20 869.13,75.98 870.55,76.38 872.08,74.85 871.68,73.43 873.90,72.51 874.62,73.79 876.78,73.79 877.50,72.51 879.72,73.43 879.32,74.85 880.85,76.38 882.27,75.98 883.19,78.20 881.91,78.92 881.91,81.08" fill="url(#gGear)" stroke="#3a3c4c" stroke-width="1" stroke-linejoin="round"/>
<circle cx="875.7" cy="80" r="2.2" fill="#a0a0a2" stroke="#3c3c50" stroke-width=".8"/>

<!-- Summary -->
<rect x="938.5" y="60.5" width="21" height="27.2" fill="#9aaa90" stroke="#2c2c2c" stroke-width="1.1"/>
<path d="M940 73 H958 M940 75.8 H958 M940 85.6 H958" stroke="#6a9a4a" stroke-width=".7" fill="none"/>
<path d="M948 62.2 A4.7 4.7 0 0 0 948 71.6 Z" fill="#6ab0c4" stroke="#2c2c2c" stroke-width=".7"/>
<path d="M949.6 62 A4.7 4.7 0 0 1 954.3 66.4 L949.6 66.4 Z" fill="#6a62a8" stroke="#2c2c2c" stroke-width=".6"/>
<path d="M954.3 67.8 A4.6 4 0 0 1 949.6 71.6 L949.6 67.8 Z" fill="#c0a024" stroke="#2c2c2c" stroke-width=".6"/>
<rect x="941.1" y="79" width="2.8" height="6.6" fill="#b02a14"/>
<rect x="945.1" y="77" width="2.8" height="8.6" fill="#5a4aa0"/>
<rect x="949.1" y="82" width="2.8" height="3.6" fill="#c07c20"/>
<rect x="953.1" y="75" width="2.8" height="10.6" fill="#0e4c9c"/>

<!-- Totals Location -->
<rect x="989.4" y="58.4" width="21.4" height="27" fill="#98aec0" stroke="#383838" stroke-width="1.1"/>
<path d="M992 63.2 H1008 M992 66.2 H1008 M992 69.4 H1008 M992 72.4 H1008 M992 75.4 H1008 M992 78.4 H1008 M992 81.4 H1003" stroke="#3a78b4" stroke-width=".8" fill="none"/>
<circle cx="1005.3" cy="63.2" r="2.5" fill="url(#gBall)" stroke="#7a2a1a" stroke-width=".5"/>
<circle cx="995.4" cy="69.3" r="2.5" fill="url(#gBall)" stroke="#7a2a1a" stroke-width=".5"/>
<circle cx="995.4" cy="78.3" r="2.5" fill="url(#gBall)" stroke="#7a2a1a" stroke-width=".5"/>
<path d="M1004 68.2 L1018.2 68.2 L1018.6 73.6 L1017 73.6 C1016.6 71,1015.4 70.4,1013.4 70.4 L1009 70.4 L1014 77.6 L1008 85.4 L1014 85.4 C1016.4 85.4,1017.6 84.6,1018 82 L1019.4 82 L1018.6 88.4 L1004 88.4 L1004 87 L1010 78.6 L1004 69.8 Z" fill="#84120e" stroke="#3e0a08" stroke-width=".9" stroke-linejoin="round"/>

<!-- Format Field -->
<rect x="1038.5" y="62.4" width="31" height="25.4" fill="#90a4b6" stroke="#343434" stroke-width="1.1"/>
<rect x="1039.1" y="63" width="29.8" height="4" fill="#2a68ac"/>
<rect x="1039.1" y="67" width="29.8" height=".8" fill="#343434"/>
<rect x="1040.6" y="69.6" width="26.8" height="6.6" fill="#a8a8a8" stroke="#343434" stroke-width="1"/>
<rect x="1040.6" y="78.6" width="26.8" height="6.6" fill="#a8a8a8" stroke="#343434" stroke-width="1"/>
<path d="M1057 73.6 L1059 72 L1059 73.6 Z M1060 73.6 L1062 72 L1062 73.6 Z M1063 73.6 L1064.6 72.4 L1064.6 73.6 Z" fill="#2a2a2a" stroke="#2a2a2a" stroke-width=".5"/>
<path d="M1043 82.6 L1045 81 L1045 82.6 Z M1046 82.6 L1048 81 L1048 82.6 Z M1049 82.6 L1050.6 81.4 L1050.6 82.6 Z" fill="#2a2a2a" stroke="#2a2a2a" stroke-width=".5"/>

<!-- Fetch All Data -->
<path d="M1094.6 79.4 L1094.6 86.8 L1121.4 86.8 L1121.4 79.4" fill="none" stroke="#6e6a5e" stroke-width="3.6" stroke-linejoin="round" opacity=".6"/>
<path d="M1094.4 78.4 L1094.4 85.4 L1121 85.4 L1121 78.4" fill="none" stroke="#7c6e4c" stroke-width="3.4" stroke-linejoin="miter"/>
<path d="M1094.4 78.4 L1094.4 85.4 L1121 85.4 L1121 78.4" fill="none" stroke="#b8a064" stroke-width="2.2" stroke-linejoin="miter"/>
<path d="M1097.2 58.6 L1107.8 66 L1118.4 58.6 L1118.4 66 L1107.8 74.2 L1097.2 66 Z" fill="url(#gChev)" stroke="#3a7a2c" stroke-width=".6"/>
<path d="M1097.2 67.4 L1107.8 75 L1118.4 67.4 L1118.4 73.4 L1107.8 81.6 L1097.2 73.4 Z" fill="url(#gChev)" stroke="#3a7a2c" stroke-width=".6"/>
<path d="M1097.6 67.2 L1107.8 74.6 L1118 67.2" fill="none" stroke="#9a9a9a" stroke-width=".9"/>

<!-- Expression (undimmed) -->
<path d="M1171.2 62 L1170.5 64.9 C1168 64.2,1166.8 64.8,1166.3 67 L1165.7 69.4 L1169.4 69.4 L1168.8 72 L1165.1 72 L1161.9 86 L1157.8 86 L1161 72 L1158.6 72 L1159.2 69.4 L1161.6 69.4 L1162.3 66.4 C1163.4 62.2,1166.6 60.8,1171.2 62 Z" fill="#767676" stroke="#101010" stroke-width="1.1" stroke-linejoin="round"/>
<rect x="1171.2" y="71.6" width="13.6" height="2.8" fill="#3a3a3a" stroke="#0c0c0c" stroke-width=".9"/>
<rect x="1171.2" y="78.9" width="13.6" height="2.8" fill="#3a3a3a" stroke="#0c0c0c" stroke-width=".9"/>

<!-- Top Value -->
<rect x="1217.4" y="66.6" width="28.2" height="22.8" fill="#8fa0ae" stroke="#4a4a4a" stroke-width="1"/>
<rect x="1217.9" y="67.1" width="27.2" height="4.6" fill="url(#gTVred)"/>
<path d="M1218 75.4 H1245 M1218 79 H1245 M1218 82.6 H1245 M1218 86.2 H1245 M1221.4 72 V89 M1225.2 72 V89 M1229 72 V89 M1232.8 72 V89 M1236.6 72 V89 M1240.4 72 V89" stroke="#66788a" stroke-width=".9" fill="none"/>
<path d="M1239 58.6 L1244 58.6 L1244 66 L1246.6 66 L1241.5 71.8 L1236.4 66 L1239 66 Z" fill="url(#gChev)" stroke="#3a6a2c" stroke-width=".6"/>

<!-- window controls -->
<rect x="1201.6" y="14.4" width="9.8" height="4" rx="1.6" fill="#a8a8a8" stroke="#505458" stroke-width="1.1"/>
<rect x="1233.5" y="10.5" width="10" height="8" rx="1.3" fill="none" stroke="#505458" stroke-width="1.1"/>
<rect x="1236.6" y="13.4" width="4.4" height="2.6" fill="#a8a8a8" stroke="#505458" stroke-width="1"/>
<path d="M1264.6 10.6 L1266.6 10.6 L1269.4 13.2 L1272.2 10.6 L1274.2 10.6 L1274.6 11.6 L1271.2 14.6 L1274.6 17.6 L1274.2 18.6 L1272.2 18.6 L1269.4 16 L1266.6 18.6 L1264.6 18.6 L1264.2 17.6 L1267.6 14.6 L1264.2 11.6 Z" fill="#a8a8a8" stroke="#44484c" stroke-width="1.1" stroke-linejoin="round"/>
<path d="M1267 42.6 L1271.6 37.6 L1276.2 42.6 L1274.9 43.9 L1271.6 40.5 L1268.3 43.9 Z" fill="#a8a8a8" stroke="#44484c" stroke-width="1.1" stroke-linejoin="round"/>
</svg>

<div class="abs" style="left:7px;top:142px;width:1px;height:615px;background:#5f6266"></div>
<div class="abs" style="left:1284px;top:142px;width:1px;height:615px;background:#5f6266"></div>
<div class="abs" style="left:8px;top:142px;width:1276px;height:3px;background:#929396"></div>
<div class="abs" style="left:8px;top:145px;width:1276px;height:1px;background:#74777b"></div>
<div class="abs" style="left:1280px;top:146px;width:4px;height:585px;background:linear-gradient(90deg,#8c8d90,#98999b)"></div>
<div class="abs" style="left:8px;top:146px;width:1272px;height:581px;border-left:1px solid #84868a;border-right:1px solid #74777b;border-bottom:1px solid #74777b;background:#a6a6a6"></div>
<div class="abs" style="left:12px;top:149px;width:202px;height:573px;border:1px solid #74777b;border-radius:2px 2px 0 0;background:#9a9b9d"></div>
<div class="abs" style="left:13px;top:150px;width:200px;height:18px;background:linear-gradient(#929497,#8e9093)"></div>
<div class="abs" style="left:13px;top:168px;width:200px;height:1px;background:#86888c"></div>
<div class="t" style="left:24.10px;top:154px;letter-spacing:-0.057px;color:#2e3136">Dashboard List</div>
<div class="abs" style="left:15px;top:171px;width:196px;height:548px;border:1px solid #777a7e;background:#a6a6a6"></div>
<div class="t li" style="left:18.90px;top:175px;letter-spacing:-0.072px;text-decoration:underline;text-decoration-skip-ink:none">Inventory Sales Trend</div>
<div class="t li" style="left:18.90px;top:193px;">Inventory Stock Count</div>
<div class="t li" style="left:18.90px;top:211px;letter-spacing:-0.114px;">Item Sales By City</div>
<svg class="abs" style="left:216px;top:432px" width="5" height="8" viewBox="0 0 5 8"><path d="M4.1 1 L4.1 6 L0.9 3.5 Z" fill="#5e6266"/></svg>
<div class="abs" style="left:222px;top:147px;width:1052px;height:277px;border-radius:2px;background:#6e7175"></div>
<div class="abs" style="left:224px;top:149px;width:1048px;height:274px;border:1px solid #8e9093;background:#0a0a0a"></div>
<div class="abs" style="left:262px;top:161px;width:798px;height:217px;border:1px solid #5c5c5c;border-bottom:none;background:#333"></div>
<div class="abs" style="left:257px;top:377px;width:5px;height:1px;background:#7a7a7a"></div>
<div class="t ct" style="left:244.56px;top:371px;font-size:10.67px;">0</div>
<div class="abs" style="left:263px;top:345px;width:796px;height:1px;background:#434343"></div>
<div class="abs" style="left:257px;top:345px;width:5px;height:1px;background:#7a7a7a"></div>
<div class="t ct" style="left:238.37px;top:339px;letter-spacing:0.270px;font-size:10.67px;">50</div>
<div class="abs" style="left:263px;top:314px;width:796px;height:1px;background:#434343"></div>
<div class="abs" style="left:257px;top:314px;width:5px;height:1px;background:#7a7a7a"></div>
<div class="t ct" style="left:232.44px;top:308px;letter-spacing:0.140px;font-size:10.67px;">100</div>
<div class="abs" style="left:263px;top:282px;width:796px;height:1px;background:#434343"></div>
<div class="abs" style="left:257px;top:282px;width:5px;height:1px;background:#7a7a7a"></div>
<div class="t ct" style="left:232.44px;top:276px;letter-spacing:0.140px;font-size:10.67px;">150</div>
<div class="abs" style="left:263px;top:250px;width:796px;height:1px;background:#434343"></div>
<div class="abs" style="left:257px;top:250px;width:5px;height:1px;background:#7a7a7a"></div>
<div class="t ct" style="left:232.44px;top:244px;letter-spacing:0.140px;font-size:10.67px;">200</div>
<div class="abs" style="left:263px;top:219px;width:796px;height:1px;background:#434343"></div>
<div class="abs" style="left:257px;top:219px;width:5px;height:1px;background:#7a7a7a"></div>
<div class="t ct" style="left:232.44px;top:213px;letter-spacing:0.140px;font-size:10.67px;">250</div>
<div class="abs" style="left:263px;top:187px;width:796px;height:1px;background:#434343"></div>
<div class="abs" style="left:257px;top:187px;width:5px;height:1px;background:#7a7a7a"></div>
<div class="t ct" style="left:232.44px;top:181px;letter-spacing:0.140px;font-size:10.67px;">300</div>
<div class="abs" style="left:260px;top:366px;width:2px;height:1px;background:#747474"></div>
<div class="abs" style="left:260px;top:356px;width:2px;height:1px;background:#747474"></div>
<div class="abs" style="left:260px;top:335px;width:2px;height:1px;background:#747474"></div>
<div class="abs" style="left:260px;top:324px;width:2px;height:1px;background:#747474"></div>
<div class="abs" style="left:260px;top:303px;width:2px;height:1px;background:#747474"></div>
<div class="abs" style="left:260px;top:293px;width:2px;height:1px;background:#747474"></div>
<div class="abs" style="left:260px;top:271px;width:2px;height:1px;background:#747474"></div>
<div class="abs" style="left:260px;top:261px;width:2px;height:1px;background:#747474"></div>
<div class="abs" style="left:260px;top:240px;width:2px;height:1px;background:#747474"></div>
<div class="abs" style="left:260px;top:229px;width:2px;height:1px;background:#747474"></div>
<div class="abs" style="left:260px;top:208px;width:2px;height:1px;background:#747474"></div>
<div class="abs" style="left:260px;top:198px;width:2px;height:1px;background:#747474"></div>
<div class="abs" style="left:260px;top:176px;width:2px;height:1px;background:#747474"></div>
<div class="abs" style="left:260px;top:166px;width:2px;height:1px;background:#747474"></div>
<div class="abs" style="left:262px;top:161px;width:1px;height:217px;background:#6c6c6c"></div>
<div class="abs" style="left:257px;top:377px;width:803px;height:1px;background:#646464"></div>
<div class="abs" style="left:289px;top:378px;width:1px;height:2px;background:#787878"></div>
<div class="abs" style="left:342px;top:378px;width:1px;height:2px;background:#787878"></div>
<div class="abs" style="left:395px;top:378px;width:1px;height:5px;background:#787878"></div>
<div class="abs" style="left:448px;top:378px;width:1px;height:2px;background:#787878"></div>
<div class="abs" style="left:501px;top:378px;width:1px;height:2px;background:#787878"></div>
<div class="abs" style="left:554px;top:378px;width:1px;height:2px;background:#787878"></div>
<div class="abs" style="left:607px;top:378px;width:1px;height:2px;background:#787878"></div>
<div class="abs" style="left:661px;top:378px;width:1px;height:5px;background:#787878"></div>
<div class="abs" style="left:714px;top:378px;width:1px;height:2px;background:#787878"></div>
<div class="abs" style="left:767px;top:378px;width:1px;height:2px;background:#787878"></div>
<div class="abs" style="left:820px;top:378px;width:1px;height:2px;background:#787878"></div>
<div class="abs" style="left:873px;top:378px;width:1px;height:2px;background:#787878"></div>
<div class="abs" style="left:926px;top:378px;width:1px;height:5px;background:#787878"></div>
<div class="abs" style="left:979px;top:378px;width:1px;height:2px;background:#787878"></div>
<div class="abs" style="left:1032px;top:378px;width:1px;height:2px;background:#787878"></div>
<div class="abs" style="left:581px;top:364px;width:160px;height:13px;background:#000"></div>
<div class="abs" style="left:582px;top:365px;width:158px;height:5px;background:linear-gradient(90deg,#a08c3e,#8a7830)"></div>
<div class="abs" style="left:582px;top:371px;width:158px;height:6px;background:linear-gradient(90deg,#995335,#84381c)"></div>
<div class="abs" style="left:846px;top:181px;width:161px;height:196px;background:#000"></div>
<div class="abs" style="left:847px;top:182px;width:159px;height:5px;background:linear-gradient(90deg,#a08c3e,#8a7830)"></div>
<div class="abs" style="left:847px;top:188px;width:159px;height:189px;background:linear-gradient(90deg,#995335,#84381c)"></div>
<div class="abs" style="left:315px;top:375px;width:160px;height:1px;background:#232323"></div><div class="abs" style="left:315px;top:376px;width:160px;height:1px;background:#0a0a0a"></div>
<div class="t ct" style="left:373.34px;top:387px;letter-spacing:0.081px;font-size:10.67px;">Australia</div>
<div class="t ct" style="left:622.35px;top:402px;letter-spacing:-0.102px;font-size:10.67px;">United Kingdom</div>
<div class="t ct" style="left:866.45px;top:387px;letter-spacing:0.097px;font-size:10.67px;">United States of America</div>
<div class="abs" style="left:1075px;top:166px;width:16px;height:12px;background:linear-gradient(90deg,#a8843e,#8c6a24)"></div>
<div class="t ct" style="left:1096.60px;top:166px;letter-spacing:-0.248px;font-size:10.67px;">16GB Memory Stick PRO Duo</div>
<div class="abs" style="left:1075px;top:184px;width:16px;height:12px;background:linear-gradient(90deg,#628a30,#46701a)"></div>
<div class="t ct" style="left:1096.60px;top:184px;letter-spacing:-0.232px;font-size:10.67px;">8GB MicroSD Memory Card</div>
<div class="abs" style="left:1075px;top:202px;width:16px;height:12px;background:linear-gradient(90deg,#a05a3a,#873c20)"></div>
<div class="t ct" style="left:1096.60px;top:202px;letter-spacing:-0.069px;font-size:10.67px;">Acer G245Hbmid 24” Monitor</div>
<div class="abs" style="left:1075px;top:220px;width:16px;height:12px;background:linear-gradient(90deg,#a8943e,#8c7a30)"></div>
<div class="t ct" style="left:1096.60px;top:220px;letter-spacing:-0.145px;font-size:10.67px;">Altec Lansing BXR1220 Speakers</div>
<div class="abs" style="left:1075px;top:238px;width:16px;height:12px;background:linear-gradient(90deg,#62a040,#4c8c34)"></div>
<div class="t ct" style="left:1096.60px;top:238px;letter-spacing:-0.135px;font-size:10.67px;">Apple iPad</div>
<svg class="abs" style="left:744px;top:425px" width="8" height="5" viewBox="0 0 8 5"><path d="M1 1 L6 1 L3.5 4 Z" fill="#5c6064"/></svg>
<div class="abs" style="left:222px;top:430px;width:1052px;height:291px;border-radius:2px;background:#6e7175"></div>
<div class="abs" style="left:224px;top:431px;width:1048px;height:289px;background:#8e9093"></div>
<div class="abs" style="left:225px;top:432px;width:1046px;height:287px;border:1px solid #777a7e;background:#a6a6a6"></div>
<div class="abs" style="left:226px;top:433px;width:1044px;height:29px;background:#97989b"></div>
<div class="abs" style="left:226px;top:462px;width:1044px;height:1px;background:#84868a"></div>
<div class="t pv" style="left:230.00px;top:442px;letter-spacing:-0.080px;color:#2e3034">Drop Filter Fields Here</div>
<div class="abs" style="left:226px;top:463px;width:1044px;height:34px;background:#96979b"></div>
<div class="abs" style="left:226px;top:497px;width:391px;height:20px;background:#96979b"></div>
<div class="abs" style="left:229px;top:466px;width:104px;height:21px;border:1px solid #7e8185;background:linear-gradient(#9d9ea0,#98999c)"></div>
<div class="t pv" style="left:234.90px;top:471px;letter-spacing:0.190px;color:#2b2d31">Order Quantity</div>
<div class="abs" style="left:617px;top:466px;width:76px;height:21px;border:1px solid #7e8185;background:linear-gradient(#9d9ea0,#98999c)"></div>
<div class="t pv" style="left:622.90px;top:471px;letter-spacing:0.267px;color:#2b2d31">Country</div>
<svg class="abs" style="left:667px;top:473px" width="9" height="6" viewBox="0 0 9 6"><path d="M1 5 L8 5 L4.5 1.3 Z" fill="#0a0a0a"/></svg>
<div class="abs" style="left:229px;top:493px;width:385px;height:21px;border:1px solid #7e8185;background:linear-gradient(#9d9ea0,#98999c)"></div>
<div class="t pv" style="left:234.90px;top:498px;letter-spacing:0.223px;color:#2b2d31">Item</div>
<svg class="abs" style="left:588px;top:500px" width="9" height="6" viewBox="0 0 9 6"><path d="M1 5 L8 5 L4.5 1.3 Z" fill="#0a0a0a"/></svg>
<div class="abs" style="left:616px;top:496px;width:401px;height:21px;background:#7e8185"></div>
<div class="abs" style="left:617px;top:497px;width:99px;height:19px;background:linear-gradient(#9d9ea0,#999a9d)"></div>
<div class="t pv" style="left:621.90px;top:501px;letter-spacing:0.167px;color:#2b2d31">Australia</div>
<div class="abs" style="left:717px;top:497px;width:99px;height:19px;background:linear-gradient(#9d9ea0,#999a9d)"></div>
<div class="t pv" style="left:721.90px;top:501px;letter-spacing:-0.034px;color:#2b2d31">United Kingdom</div>
<div class="abs" style="left:817px;top:497px;width:99px;height:19px;background:linear-gradient(#9d9ea0,#999a9d)"></div>
<div class="t pv" style="left:821.90px;top:501px;letter-spacing:-0.205px;color:#2b2d31">United States of ...</div>
<div class="abs" style="left:917px;top:497px;width:99px;height:19px;background:linear-gradient(#9d9ea0,#999a9d)"></div>
<div class="t pv" style="left:921.90px;top:501px;letter-spacing:0.030px;color:#2b2d31">Grand Total</div>
<div class="abs" style="left:226px;top:516px;width:391px;height:121px;background:#7e8185"></div>
<div class="abs" style="left:617px;top:517px;width:400px;height:120px;background:#8f9197"></div>
<div class="abs" style="left:226px;top:517px;width:390px;height:19px;background:#9b9c9e"></div>
<div class="t pv" style="left:230.80px;top:521px;letter-spacing:-0.177px;">16GB Memory Stick PRO Duo</div>
<div class="abs" style="left:617px;top:517px;width:99px;height:19px;background:#9197a2"></div>
<div class="abs" style="left:717px;top:517px;width:99px;height:19px;background:#a6a6a6"></div>
<div class="abs" style="left:817px;top:517px;width:99px;height:19px;background:#a6a6a6"></div>
<div class="t pv" style="left:901.58px;top:521px;letter-spacing:0.175px;">40</div>
<div class="abs" style="left:917px;top:517px;width:99px;height:19px;background:#9d9e9f"></div>
<div class="t pv" style="left:1001.58px;top:521px;letter-spacing:0.175px;">40</div>
<div class="abs" style="left:226px;top:537px;width:390px;height:19px;background:#9b9c9e"></div>
<div class="t pv" style="left:230.80px;top:541px;letter-spacing:-0.101px;">8GB MicroSD Memory Card</div>
<div class="abs" style="left:617px;top:537px;width:99px;height:19px;background:#9197a2"></div>
<div class="abs" style="left:717px;top:537px;width:99px;height:19px;background:#9197a2"></div>
<div class="t pv" style="left:807.88px;top:541px;">1</div>
<div class="abs" style="left:817px;top:537px;width:99px;height:19px;background:#9197a2"></div>
<div class="abs" style="left:917px;top:537px;width:99px;height:19px;background:#9d9e9f"></div>
<div class="t pv" style="left:1007.88px;top:541px;">1</div>
<div class="abs" style="left:226px;top:557px;width:390px;height:19px;background:#9b9c9e"></div>
<div class="t pv" style="left:230.80px;top:561px;letter-spacing:-0.049px;">Acer G245Hbmid 24” Monitor</div>
<div class="abs" style="left:617px;top:557px;width:99px;height:19px;background:#9197a2"></div>
<div class="t pv" style="left:707.88px;top:561px;">1</div>
<div class="abs" style="left:717px;top:557px;width:99px;height:19px;background:#9197a2"></div>
<div class="t pv" style="left:801.58px;top:561px;letter-spacing:0.175px;">10</div>
<div class="abs" style="left:817px;top:557px;width:99px;height:19px;background:#9197a2"></div>
<div class="t pv" style="left:895.55px;top:561px;letter-spacing:0.047px;">300</div>
<div class="abs" style="left:917px;top:557px;width:99px;height:19px;background:#9d9e9f"></div>
<div class="t pv" style="left:995.82px;top:561px;letter-spacing:0.318px;">311</div>
<div class="abs" style="left:226px;top:577px;width:390px;height:19px;background:#9b9c9e"></div>
<div class="t pv" style="left:230.80px;top:581px;letter-spacing:-0.207px;">Altec Lansing BXR1220 Speakers</div>
<div class="abs" style="left:617px;top:577px;width:99px;height:19px;background:#9197a2"></div>
<div class="t pv" style="left:707.88px;top:581px;">1</div>
<div class="abs" style="left:717px;top:577px;width:99px;height:19px;background:#9197a2"></div>
<div class="t pv" style="left:801.58px;top:581px;letter-spacing:0.175px;">10</div>
<div class="abs" style="left:817px;top:577px;width:99px;height:19px;background:#9197a2"></div>
<div class="t pv" style="left:901.58px;top:581px;letter-spacing:0.175px;">10</div>
<div class="abs" style="left:917px;top:577px;width:99px;height:19px;background:#9d9e9f"></div>
<div class="t pv" style="left:1001.58px;top:581px;letter-spacing:0.175px;">21</div>
<div class="abs" style="left:226px;top:597px;width:390px;height:19px;background:#9b9c9e"></div>
<div class="t pv" style="left:230.80px;top:601px;letter-spacing:-0.082px;">Apple iPad</div>
<div class="abs" style="left:617px;top:597px;width:99px;height:19px;background:#9197a2"></div>
<div class="abs" style="left:717px;top:597px;width:99px;height:19px;background:#9197a2"></div>
<div class="t pv" style="left:807.88px;top:601px;">1</div>
<div class="abs" style="left:817px;top:597px;width:99px;height:19px;background:#9197a2"></div>
<div class="abs" style="left:917px;top:597px;width:99px;height:19px;background:#9d9e9f"></div>
<div class="t pv" style="left:1007.88px;top:601px;">1</div>
<div class="abs" style="left:226px;top:617px;width:390px;height:19px;background:#9b9c9e"></div>
<div class="t pv" style="left:230.80px;top:621px;letter-spacing:0.066px;">Grand Total</div>
<div class="abs" style="left:617px;top:617px;width:99px;height:19px;background:#9197a2"></div>
<div class="t pv" style="left:707.88px;top:621px;">2</div>
<div class="abs" style="left:717px;top:617px;width:99px;height:19px;background:#9197a2"></div>
<div class="t pv" style="left:801.58px;top:621px;letter-spacing:0.175px;">22</div>
<div class="abs" style="left:817px;top:617px;width:99px;height:19px;background:#9197a2"></div>
<div class="t pv" style="left:895.55px;top:621px;letter-spacing:0.047px;">350</div>
<div class="abs" style="left:917px;top:617px;width:99px;height:19px;background:#9d9e9f"></div>
<div class="t pv" style="left:995.55px;top:621px;letter-spacing:0.047px;">374</div>
<div class="abs" style="left:8px;top:727px;width:1276px;height:4px;background:#98999b"></div>
<div class="abs" style="left:8px;top:731px;width:1276px;height:26px;border-top:1px solid #6e7175;border-bottom:1px solid #6a6c70;background:linear-gradient(#9c9d9f 0,#929396 40%,#85878a 100%)"></div>
<div class="t" style="left:13.90px;top:738px;letter-spacing:-0.199px;color:#2b2d31">Ready</div>
<svg class="abs" style="left:1268px;top:740px" width="16" height="16"><rect x="13" y="4" width="2" height="2" fill="#9c9d9f"/><rect x="12" y="3" width="2" height="2" fill="#5c5e62"/><rect x="9" y="8" width="2" height="2" fill="#9c9d9f"/><rect x="8" y="7" width="2" height="2" fill="#5c5e62"/><rect x="13" y="8" width="2" height="2" fill="#9c9d9f"/><rect x="12" y="7" width="2" height="2" fill="#5c5e62"/><rect x="5" y="12" width="2" height="2" fill="#9c9d9f"/><rect x="4" y="11" width="2" height="2" fill="#5c5e62"/><rect x="9" y="12" width="2" height="2" fill="#9c9d9f"/><rect x="8" y="11" width="2" height="2" fill="#5c5e62"/><rect x="13" y="12" width="2" height="2" fill="#9c9d9f"/><rect x="12" y="11" width="2" height="2" fill="#5c5e62"/></svg>
</body>
</html>
